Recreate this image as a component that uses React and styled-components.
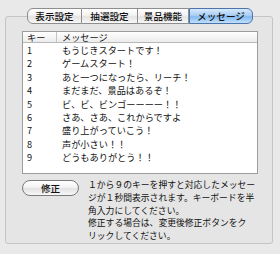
import React from 'react'
import styled, { createGlobalStyle } from 'styled-components'

const GlobalStyle = createGlobalStyle`
  html, body {
    margin: 0;
    padding: 0;
    background: #e9e9e9;
  }
  body {
    font-family: "Noto Sans CJK JP", "DejaVu Sans", sans-serif;
    color: #111;
  }
`

const tabs = [
  { label: '表示設定', width: 55 },
  { label: '抽選設定', width: 56 },
  { label: '景品機能', width: 51 },
  { label: 'メッセージ', width: 64 },
]

const messages = [
  'もうじきスタートです！',
  'ゲームスタート！',
  'あと一つになったら、リーチ！',
  'まだまだ、景品はあるぞ！',
  'ビ、ビ、ビンゴーーーー！！',
  'さあ、さあ、これからですよ',
  '盛り上がっていこう！',
  '声が小さい！！',
  'どうもありがとう！！',
]

function App() {
  return (
    <Page>
      <GlobalStyle />
      <TabBar>
        {tabs.map((t, i) => (
          <Tab
            key={t.label}
            $w={t.width}
            $active={i === tabs.length - 1}
            $first={i === 0}
            $last={i === tabs.length - 1}
          >
            {t.label}
          </Tab>
        ))}
      </TabBar>
      <GroupBox>
        <Table>
          <HeadRow>
            <KeyCell>キー</KeyCell>
            <MsgCell>メッセージ</MsgCell>
          </HeadRow>
          {messages.map((m, i) => (
            <Row key={i}>
              <KeyCell>{i + 1}</KeyCell>
              <MsgCell>{m}</MsgCell>
            </Row>
          ))}
        </Table>
        <Bottom>
          <Button>修正</Button>
          <Help>
            １から９のキーを押すと対応したメッセー<br />
            ジが１秒間表示されます。キーボードを半<br />
            角入力にしてください。<br />
            修正する場合は、変更後修正ボタンをク<br />
            リックしてください。
          </Help>
        </Bottom>
      </GroupBox>
    </Page>
  )
}

export default App

const Page = styled.div`
  width: 280px;
  height: 254px;
  padding-top: 8px;
  box-sizing: border-box;
  overflow: hidden;
`

const TabBar = styled.div`
  display: flex;
  margin-left: 27px;
  height: 16px;
  position: relative;
  z-index: 1;
`

const Tab = styled.div`
  width: ${p => p.$w}px;
  height: 16px;
  box-sizing: border-box;
  display: flex;
  align-items: center;
  justify-content: center;
  white-space: nowrap;
  font-size: 9.6px;
  line-height: 14px;
  font-weight: 500;
  border: 1px solid ${p => (p.$active ? '#4f74ab' : '#8e8e8e')};
  border-left: ${p => (p.$first || p.$active ? '' : 'none')};
  border-radius: ${p => (p.$first ? '6px 0 0 6px' : p.$last ? '0 6px 6px 0' : '0')};
  background: ${p =>
    p.$active
      ? 'linear-gradient(#d6e9fc 0%, #a9cff5 45%, #84b9ef 55%, #bfe0fc 100%)'
      : 'linear-gradient(#ffffff 0%, #f2f2f2 45%, #e4e4e4 55%, #f7f7f7 100%)'};
  color: #111;
`

const GroupBox = styled.div`
  margin: -8px 7px 0 5px;
  height: 228px;
  box-sizing: border-box;
  border: 1px solid #c4c4c4;
  border-radius: 3px;
  background: #e5e5e5;
  padding: 14px 14px 0 16px;
`

const Table = styled.div`
  height: 143px;
  box-sizing: border-box;
  border: 1px solid #9c9c9c;
  background: #fff;
  font-size: 9.2px;
`

const HeadRow = styled.div`
  display: flex;
  height: 10px;
  line-height: 10px;
  margin-bottom: 1px;
  border-bottom: 1px solid #b8b8b8;
  background: linear-gradient(#ffffff, #ececec);
  & > div:first-child {
    border-right: 1px solid #c4c4c4;
  }
`

const Row = styled.div`
  display: flex;
  height: 13.4px;
  line-height: 13.4px;
`

const KeyCell = styled.div`
  width: 34px;
  padding-left: 4px;
  box-sizing: border-box;
`

const MsgCell = styled.div`
  padding-left: 5px;
  white-space: nowrap;
`

const Bottom = styled.div`
  display: flex;
  align-items: flex-start;
  margin-top: 6px;
`

const Button = styled.div`
  width: 57px;
  height: 16px;
  box-sizing: border-box;
  border: 1px solid #7a7a7a;
  border-radius: 8px;
  background: linear-gradient(#ffffff 0%, #f3f3f3 45%, #e3e3e3 55%, #f8f8f8 100%);
  font-size: 9.6px;
  font-weight: 500;
  display: flex;
  align-items: center;
  justify-content: center;
  flex-shrink: 0;
`

const Help = styled.div`
  margin-left: 9px;
  font-size: 8.8px;
  line-height: 12.8px;
  margin-top: -1px;
  white-space: nowrap;
`
